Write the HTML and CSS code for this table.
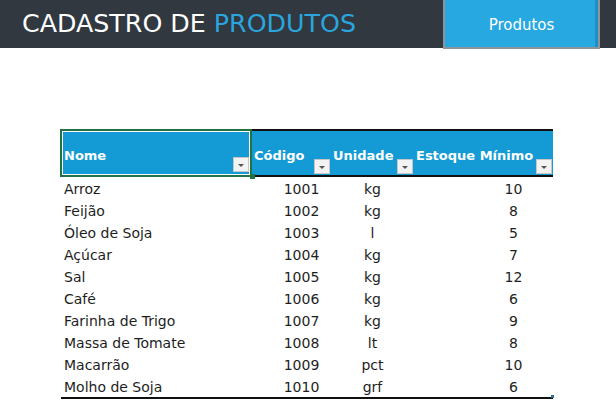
FILE: index.html
```html
<!DOCTYPE html>
<html lang="pt">
<head>
<meta charset="utf-8">
<link rel="stylesheet" href="styles.css">
</head>
<body>
<header class="topbar">
  <h1 class="title">CADASTRO DE <span class="accent">PRODUTOS</span></h1>
  <div class="navbtn">Produtos</div>
</header>
<main class="sheet">
  <div class="table">
    <div class="th th-nome selected"><span>Nome</span><i class="dd"></i></div>
    <div class="th"><span>Código</span><i class="dd"></i></div>
    <div class="th"><span>Unidade</span><i class="dd"></i></div>
    <div class="th"><span>Estoque Mínimo</span><i class="dd"></i></div>

    <div class="td nome">Arroz</div><div class="td cod">1001</div><div class="td un">kg</div><div class="td est">10</div>
    <div class="td nome">Feijão</div><div class="td cod">1002</div><div class="td un">kg</div><div class="td est">8</div>
    <div class="td nome">Óleo de Soja</div><div class="td cod">1003</div><div class="td un">l</div><div class="td est">5</div>
    <div class="td nome">Açúcar</div><div class="td cod">1004</div><div class="td un">kg</div><div class="td est">7</div>
    <div class="td nome">Sal</div><div class="td cod">1005</div><div class="td un">kg</div><div class="td est">12</div>
    <div class="td nome">Café</div><div class="td cod">1006</div><div class="td un">kg</div><div class="td est">6</div>
    <div class="td nome">Farinha de Trigo</div><div class="td cod">1007</div><div class="td un">kg</div><div class="td est">9</div>
    <div class="td nome">Massa de Tomate</div><div class="td cod">1008</div><div class="td un">lt</div><div class="td est">8</div>
    <div class="td nome">Macarrão</div><div class="td cod">1009</div><div class="td un">pct</div><div class="td est">10</div>
    <div class="td nome last">Molho de Soja</div><div class="td cod last">1010</div><div class="td un last">grf</div><div class="td est last">6</div>
    <i class="handle"></i>
  </div>
</main>
</body>
</html>
```

FILE: styles.css
```css
html, body {
  margin: 0;
  padding: 0;
  background: #ffffff;
  font-family: "DejaVu Sans", sans-serif;
}

.topbar {
  height: 48px;
  background: #31383f;
  display: flex;
  align-items: stretch;
  padding-left: 22px;
}

.title {
  margin: 0;
  font-weight: normal;
  font-size: 25.3px;
  line-height: 47px;
  color: #ffffff;
  width: 421px;
  white-space: nowrap;
}

.accent {
  color: #2aa5de;
}

.navbtn {
  width: 157px;
  height: 49px;
  box-sizing: border-box;
  background: #27a8e1;
  border: 2px solid #8d959b;
  border-top: none;
  box-shadow: inset -3px 0 0 #1e90c6;
  color: #ffffff;
  font-size: 15px;
  display: flex;
  align-items: center;
  justify-content: center;
  padding-top: 2px;
}

.sheet {
  padding: 81px 0 0 61px;
}

.table {
  position: relative;
  display: grid;
  grid-template-columns: 191px 79px 83px 139px;
  width: 492px;
}

.th {
  position: relative;
  height: 48px;
  box-sizing: border-box;
  background: #149bd5;
  border-top: 2px solid #111111;
  border-bottom: 2px solid #111111;
  color: #ffffff;
  font-weight: bold;
  font-size: 13px;
  display: flex;
  align-items: center;
  padding-left: 2px;
  padding-top: 4px;
}

.th-nome {
  padding-left: 3px;
}

.selected::after {
  content: "";
  position: absolute;
  left: -1px;
  top: -2px;
  right: 0;
  bottom: -2px;
  border: 2px solid #217346;
  box-shadow: inset 0 0 0 1px #ffffff;
  pointer-events: none;
}

.selected::before {
  content: "";
  position: absolute;
  right: -3px;
  bottom: -4px;
  width: 5px;
  height: 5px;
  background: #217346;
  z-index: 2;
}

.dd {
  position: absolute;
  right: 1px;
  bottom: 1px;
  width: 16px;
  height: 15px;
  box-sizing: border-box;
  background: #f3f3f3;
  border: 1px solid #c6c6c6;
}

.selected .dd {
  right: 3px;
  bottom: 3px;
}

.dd::after {
  content: "";
  position: absolute;
  left: 4px;
  top: 6px;
  border-left: 3px solid transparent;
  border-right: 3px solid transparent;
  border-top: 3px solid #555555;
}

.td {
  height: 22px;
  line-height: 24px;
  font-size: 14px;
  color: #1e1e1e;
  white-space: nowrap;
}

.nome {
  padding-left: 3px;
}

.cod {
  text-align: center;
  padding-left: 20px;
}

.un {
  text-align: center;
}

.est {
  text-align: center;
  padding-left: 60px;
}

.last {
  border-bottom: 2px solid #111111;
}

.handle {
  position: absolute;
  right: -1px;
  bottom: 1px;
  width: 3px;
  height: 3px;
  background: #2c6f9e;
}
```
